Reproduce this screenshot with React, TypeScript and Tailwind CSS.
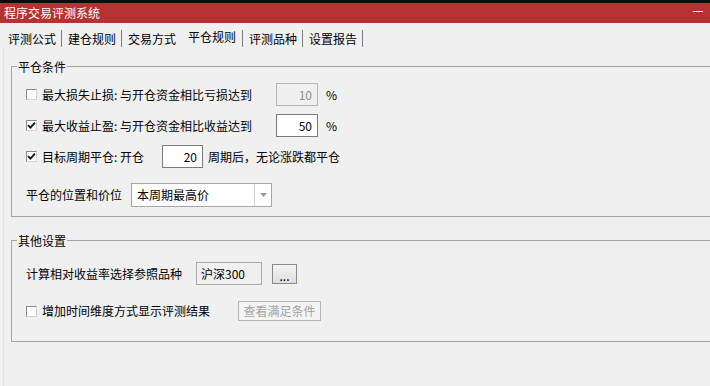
import { ReactNode } from 'react';

const tabs = ['评测公式', '建仓规则', '交易方式', '平仓规则', '评测品种', '设置报告'];
const activeTab = 3;

const CheckBox = ({ checked = false }: { checked?: boolean }) => (
  <span className="flex h-[11px] w-[11px] shrink-0 items-center justify-center border border-t-[#8a8a8a] border-l-[#8a8a8a] border-r-[#d4d4d4] border-b-[#d4d4d4] bg-white">
    {checked && (
      <svg width="9" height="9" viewBox="0 0 9 9">
        <path d="M1 4.2 L3.4 6.6 L8 1.6" fill="none" stroke="#111" strokeWidth="1.8" />
      </svg>
    )}
  </span>
);

const NumberBox = ({ value, disabled = false, width }: { value: string; disabled?: boolean; width: string }) => (
  <div
    className={`flex h-[23px] items-center justify-end border pr-[5px] ${width} ${
      disabled ? 'border-[#b5b5b5] bg-[#f0f0f0] text-[#8d8d8d]' : 'border-[#7a7a7a] bg-white text-black'
    }`}
  >
    {value}
  </div>
);

const Group = ({ title, className, children }: { title: string; className: string; children: ReactNode }) => (
  <fieldset className={`ml-[11px] mr-[-6px] border border-[#a3a3a3] ${className}`}>
    <legend className="ml-[5px] px-[1px] leading-[17px]">{title}</legend>
    {children}
  </fieldset>
);

const App = () => {
  return (
    <div
      className="h-[386px] w-[710px] overflow-hidden bg-[#f0f0f0] text-[12px] text-black"
      style={{ fontFamily: '"Noto Sans CJK SC", "Microsoft YaHei", sans-serif' }}
    >
      <div className="h-[3px] bg-[#0c0c0c]" />
      <div className="flex h-[20px] items-center justify-between bg-[#b63131] pl-[4px] pr-[7px] text-white">
        <span className="leading-[20px]">程序交易评测系统</span>
        <span className="mb-[4px] h-[1px] w-[10px] bg-white" />
      </div>

      <div className="flex pl-[2px] pt-[7px] text-[12px]">
        {tabs.map((tab, index) => (
          <div
            key={tab}
            className={`flex h-[17px] items-center pl-[6px] pr-[5px] ${
              index === activeTab - 1 ? 'border-r border-transparent' : 'border-r border-[#7c7c7c]'
            } ${index === activeTab ? 'pr-[6px]' : ''}`}
          >
            <span className={index === activeTab ? 'mt-[-3px]' : ''}>{tab}</span>
          </div>
        ))}
      </div>

      <div className="ml-[3px] h-full border-l border-[#e2e2e2] pt-[11px]">
        <div className="ml-[-4px]">
          <Group title="平仓条件" className="pb-[9px]">
            <div className="flex flex-col gap-[8px] pl-[14px] pt-[8px]">
              <div className="flex h-[23px] items-center">
                <CheckBox />
                <span className="ml-[5px] w-[234px]">最大损失止损: 与开仓资金相比亏损达到</span>
                <NumberBox value="10" disabled width="w-[42px]" />
                <span className="ml-[8px]">%</span>
              </div>
              <div className="flex h-[23px] items-center">
                <CheckBox checked />
                <span className="ml-[5px] w-[234px]">最大收益止盈: 与开仓资金相比收益达到</span>
                <NumberBox value="50" width="w-[42px]" />
                <span className="ml-[8px]">%</span>
              </div>
              <div className="flex h-[23px] items-center">
                <CheckBox checked />
                <span className="ml-[5px] w-[120px]">目标周期平仓: 开仓</span>
                <NumberBox value="20" width="w-[41px]" />
                <span className="ml-[5px]">周期后，无论涨跌都平仓</span>
              </div>
              <div className="mt-[7px] flex h-[24px] items-center">
                <span className="w-[105px]">平仓的位置和价位</span>
                <div className="flex h-[24px] w-[141px] items-center border border-[#a6a6a6] bg-white">
                  <span className="flex-1 pl-[5px]">本周期最高价</span>
                  <span className="flex h-full w-[17px] items-center justify-center border-l border-[#d0d0d0]">
                    <svg width="7" height="4" viewBox="0 0 7 4">
                      <path d="M0 0 H7 L3.5 4 Z" fill="#9a9a9a" />
                    </svg>
                  </span>
                </div>
              </div>
            </div>
          </Group>

          <Group title="其他设置" className="mt-[15px] pb-[20px]">
            <div className="flex flex-col gap-[16px] pl-[14px] pt-[13px]">
              <div className="flex h-[23px] items-center">
                <span className="w-[170px]">计算相对收益率选择参照品种</span>
                <div className="flex h-[23px] w-[66px] items-center border border-[#a8a8a8] bg-[#f0f0f0] pl-[4px]">
                  沪深300
                </div>
                <button
                  type="button"
                  className="ml-[10px] flex h-[20px] w-[25px] items-end justify-center border border-[#8a8a8a] bg-gradient-to-b from-[#f4f4f4] to-[#dedede] pb-[2px] leading-[10px]"
                >
                  ...
                </button>
              </div>
              <div className="flex h-[20px] items-center">
                <CheckBox />
                <span className="ml-[5px] w-[196px]">增加时间维度方式显示评测结果</span>
                <button
                  type="button"
                  disabled
                  className="flex h-[20px] w-[83px] items-center justify-center border border-[#b4b4b4] bg-[#f4f4f4] text-[#a3a3a3]"
                >
                  查看满足条件
                </button>
              </div>
            </div>
          </Group>
        </div>
      </div>
    </div>
  );
};

export default App;
